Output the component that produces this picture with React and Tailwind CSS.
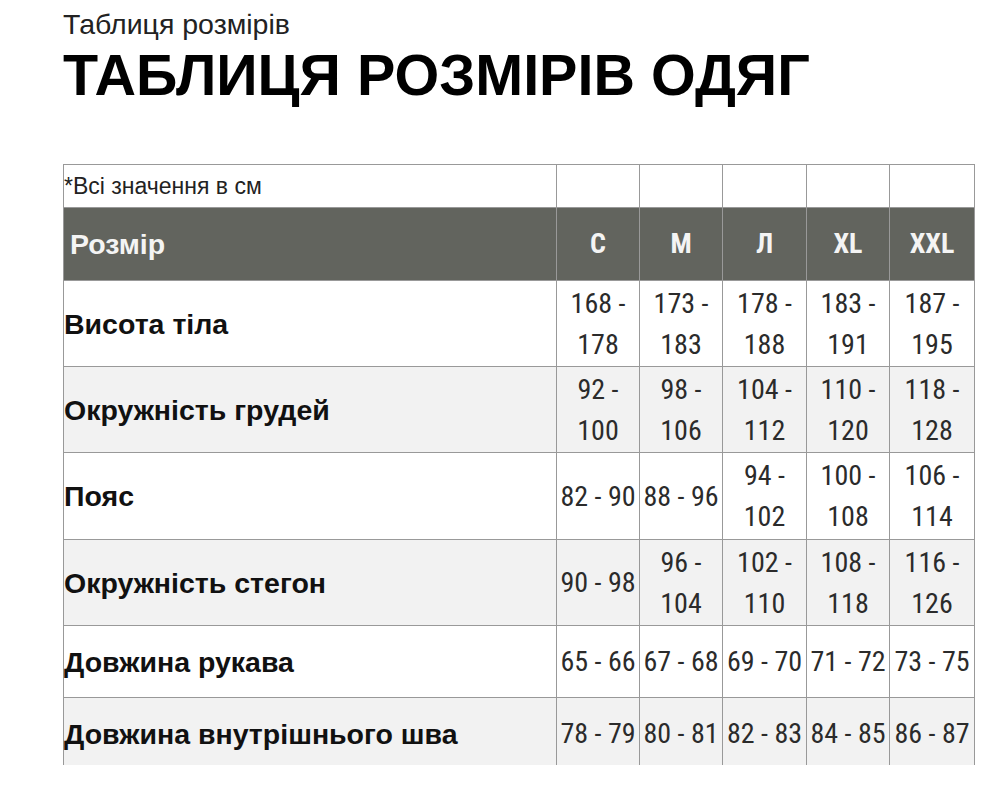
import React from "react";

const sizes = ["С", "М", "Л", "XL", "XXL"];

const rows = [
  { label: "Висота тіла", h: "h-[86px]", values: ["168 - 178", "173 - 183", "178 - 188", "183 - 191", "187 - 195"] },
  { label: "Окружність грудей", h: "h-[86px]", values: ["92 - 100", "98 - 106", "104 - 112", "110 - 120", "118 - 128"] },
  { label: "Пояс", h: "h-[87px]", values: ["82 - 90", "88 - 96", "94 - 102", "100 - 108", "106 - 114"] },
  { label: "Окружність стегон", h: "h-[86px]", values: ["90 - 98", "96 - 104", "102 - 110", "108 - 118", "116 - 126"] },
  { label: "Довжина рукава", h: "h-[72px]", values: ["65 - 66", "67 - 68", "69 - 70", "71 - 72", "73 - 75"] },
  { label: "Довжина внутрішнього шва", h: "h-[72px]", values: ["78 - 79", "80 - 81", "82 - 83", "84 - 85", "86 - 87"] },
];

const colW = ["w-[83px]", "w-[83px]", "w-[84px]", "w-[83px]", "w-[85px]"];

const narrow =
  "font-['Roboto_Condensed','Liberation_Sans_Narrow','DejaVu_Sans_Condensed',Roboto,sans-serif] font-stretch-condensed";

export default function App() {
  return (
    <div className="min-h-[802px] bg-white pl-[63px] pt-[10px] font-['Liberation_Sans',Arial,sans-serif] text-[#111]">
      <p className="text-[28.5px] leading-none text-[#222]">Таблиця розмірів</p>
      <h1 className="mt-[8px] text-[57.5px] font-bold leading-none text-black">
        ТАБЛИЦЯ РОЗМІРІВ ОДЯГ
      </h1>

      {/* table is cut off at the bottom of the screenshot */}
      <div className="mt-[60px] h-[601px] w-[913px] overflow-hidden">
        <table className="w-[911px] table-fixed border-collapse">
          <tbody>
            <tr className="h-[43px]">
              <td className="w-[493px] border border-[#999] p-0 text-[23px] leading-[26px] text-[#222]">
                *Всі значення в см
              </td>
              {colW.map((w, i) => (
                <td key={i} className={`${w} border border-[#999] p-0`}></td>
              ))}
            </tr>
            <tr className="h-[73px] bg-[#62645e] text-[#f4f4f4]">
              <th className="border border-[#999] p-0 pl-[6px] text-left text-[28.5px] font-bold leading-[34px]">
                Розмір
              </th>
              {sizes.map((s) => (
                <th
                  key={s}
                  className={`border border-[#999] p-0 text-center text-[28px] font-bold leading-[34px] ${narrow}`}
                >
                  {s}
                </th>
              ))}
            </tr>
            {rows.map((r, idx) => (
              <tr key={r.label} className={`${r.h} ${idx % 2 ? "bg-[#f2f2f2]" : "bg-white"}`}>
                <td className="border border-[#999] p-0 text-[28.5px] font-bold leading-[34px] text-[#111]">
                  {r.label}
                </td>
                {r.values.map((v, i) => (
                  <td
                    key={i}
                    className={`border border-[#999] p-0 text-center text-[28px] leading-[41px] text-[#2b2b2b] ${narrow}`}
                  >
                    {v}
                  </td>
                ))}
              </tr>
            ))}
          </tbody>
        </table>
      </div>
    </div>
  );
}
